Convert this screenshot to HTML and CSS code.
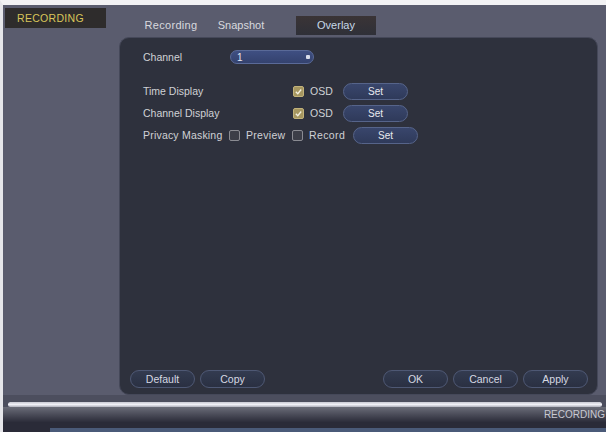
FILE: index.html
```html
<!DOCTYPE html>
<html>
<head>
<meta charset="utf-8">
<link rel="stylesheet" href="styles.css">
</head>
<body>
<div class="screen">
  <div class="top">
    <div class="rec">RECORDING</div>
    <div class="tabs">
      <div class="tab t1">Recording</div>
      <div class="tab t2">Snapshot</div>
      <div class="tab t3 active">Overlay</div>
    </div>
  </div>
  <div class="mid">
    <div class="side"></div>
    <div class="panel">
      <div class="form">
        <div class="row chan">
          <span class="lbl w-chan">Channel</span>
          <div class="select"><span>1</span><i class="dot"></i></div>
        </div>
        <div class="row r1">
          <span class="lbl w-lab">Time Display</span>
          <span class="cb on"><svg viewBox="0 0 10 10"><path d="M2 5.2 L4.2 7.4 L8 2.8" fill="none" stroke="#f4f0e0" stroke-width="1.5"/></svg></span>
          <span class="txt w-osd">OSD</span>
          <span class="btn set">Set</span>
        </div>
        <div class="row r2">
          <span class="lbl w-lab">Channel Display</span>
          <span class="cb on"><svg viewBox="0 0 10 10"><path d="M2 5.2 L4.2 7.4 L8 2.8" fill="none" stroke="#f4f0e0" stroke-width="1.5"/></svg></span>
          <span class="txt w-osd">OSD</span>
          <span class="btn set">Set</span>
        </div>
        <div class="row r3">
          <span class="lbl w-pm">Privacy Masking</span>
          <span class="cb"></span>
          <span class="txt w-prev">Preview</span>
          <span class="cb"></span>
          <span class="txt w-recd">Record</span>
          <span class="btn set">Set</span>
        </div>
      </div>
      <div class="actions">
        <div class="grp">
          <span class="btn act">Default</span>
          <span class="btn act">Copy</span>
        </div>
        <div class="grp">
          <span class="btn act">OK</span>
          <span class="btn act">Cancel</span>
          <span class="btn act">Apply</span>
        </div>
      </div>
    </div>
  </div>
  <div class="footer">
    <div class="hl"></div>
    <div class="band"><span class="frec">RECORDING</span></div>
    <div class="strip"><div class="sr"></div></div>
  </div>
</div>
</body>
</html>
```
FILE: styles.css
```css
html, body {
  margin: 0;
  padding: 0;
  background: #5a5c6e;
}
body {
  font-family: "Liberation Sans", Arial, sans-serif;
  font-size: 10.5px;
  color: #d4d5da;
}
.screen {
  width: 606px;
  height: 432px;
  box-sizing: border-box;
  border-top: 5px solid #f2f2f4;
  border-left: 3px solid #e6e6ea;
  background: #5a5c6e;
  display: flex;
  flex-direction: column;
  overflow: hidden;
}
.top {
  height: 30px;
  display: flex;
  flex-shrink: 0;
}
.rec {
  margin: 3px 0 0 2px;
  width: 101px;
  height: 20px;
  background: #2e2c2c;
  color: #d8c55a;
  font-size: 10.5px;
  line-height: 21px;
  padding-left: 12px;
  box-sizing: border-box;
  letter-spacing: 0.3px;
}
.tabs {
  display: flex;
  align-items: flex-end;
  margin-left: 25px;
}
.tab {
  height: 19px;
  line-height: 19px;
  text-align: center;
  color: #d8d9de;
  font-size: 11px;
}
.t1 { width: 80px; letter-spacing: 0.3px; }
.t2 { width: 56px; margin-left: 2px; }
.t3 { width: 80px; margin-left: 27px; }
.tab.active {
  background: linear-gradient(#3a3436, #2f3038);
  color: #c6d8e8;
}
.mid {
  display: flex;
  height: 360px;
  flex-shrink: 0;
}
.side { width: 116px; }
.panel {
  width: 479px;
  height: 358px;
  margin-top: 2px;
  box-sizing: border-box;
  background: #2e313d;
  border-radius: 10px;
  border: 1px solid #454859;
  display: flex;
  flex-direction: column;
  justify-content: space-between;
  padding: 11px 9px 6px 10px;
}
.form {
  padding-left: 13px;
}
.row {
  display: flex;
  align-items: center;
  height: 18px;
}
.chan { height: 16px; }
.r1 { margin-top: 17px; }
.r2 { margin-top: 4px; }
.r3 { margin-top: 4px; }
.lbl { color: #d0d1d6; }
.w-chan { width: 87px; }
.w-lab { width: 150px; }
.w-pm { width: 86px; letter-spacing: 0.2px; }
.select {
  width: 84px;
  height: 14px;
  box-sizing: border-box;
  border-radius: 7px;
  border: 1px solid #5a6a98;
  background: linear-gradient(#3f4f82, #34426e);
  display: flex;
  align-items: center;
  justify-content: space-between;
  padding: 0 3px 0 6px;
  color: #e6e8f0;
  font-size: 10px;
}
.dot {
  width: 4px;
  height: 4px;
  background: #d8dcea;
  border-radius: 1px;
}
.cb {
  width: 9px;
  height: 9px;
  flex-shrink: 0;
  border: 1px solid #8a8b92;
  background: #3c3e48;
  border-radius: 2px;
  display: inline-flex;
}
.cb.on {
  background: #a59660;
  border-color: #c2b27a;
}
.cb svg { width: 9px; height: 9px; }
.txt { margin-left: 6px; color: #d0d1d6; }
.w-osd { width: 33px; }
.w-prev { width: 40px; margin-right: 6px; letter-spacing: 0.3px; }
.w-recd { width: 39px; margin-right: 5px; letter-spacing: 0.4px; }
.btn {
  display: inline-block;
  box-sizing: border-box;
  border-radius: 9px;
  text-align: center;
  color: #e8e9ee;
  flex-shrink: 0;
}
.set {
  width: 65px;
  height: 17px;
  line-height: 15px;
  border: 1px solid #56648a;
  background: linear-gradient(#39466c, #2f3a5a);
  font-size: 10px;
}
.actions {
  display: flex;
  justify-content: space-between;
}
.grp {
  display: flex;
  gap: 5px;
}
.act {
  width: 65px;
  height: 18px;
  line-height: 16px;
  border: 1px solid #4e5874;
  background: linear-gradient(#333b50, #2a3042);
  color: #d6d8e2;
}
.footer {
  flex: 1;
  display: flex;
  flex-direction: column;
  background: #4c4e5e;
  padding-top: 7px;
}
.hl {
  height: 5px;
  margin: 0 4px 0 5px;
  border-radius: 3px;
  background: linear-gradient(#c8c9d2, #f0f0f6 50%, #b0b1bc);
}
.band {
  height: 15px;
  background: linear-gradient(#6a6c78, #3e3f4c 70%, #2c2d3a);
  display: flex;
  justify-content: flex-end;
  align-items: center;
}
.frec {
  color: #c8c9d2;
  font-size: 10px;
  margin-right: 1px;
}
.strip {
  flex: 1;
  display: flex;
  flex-direction: column;
  background: #2a2b38;
  justify-content: flex-end;
}
.strip .sr {
  height: 4px;
  margin-left: 47px;
  background: #4a5a78;
}
```
